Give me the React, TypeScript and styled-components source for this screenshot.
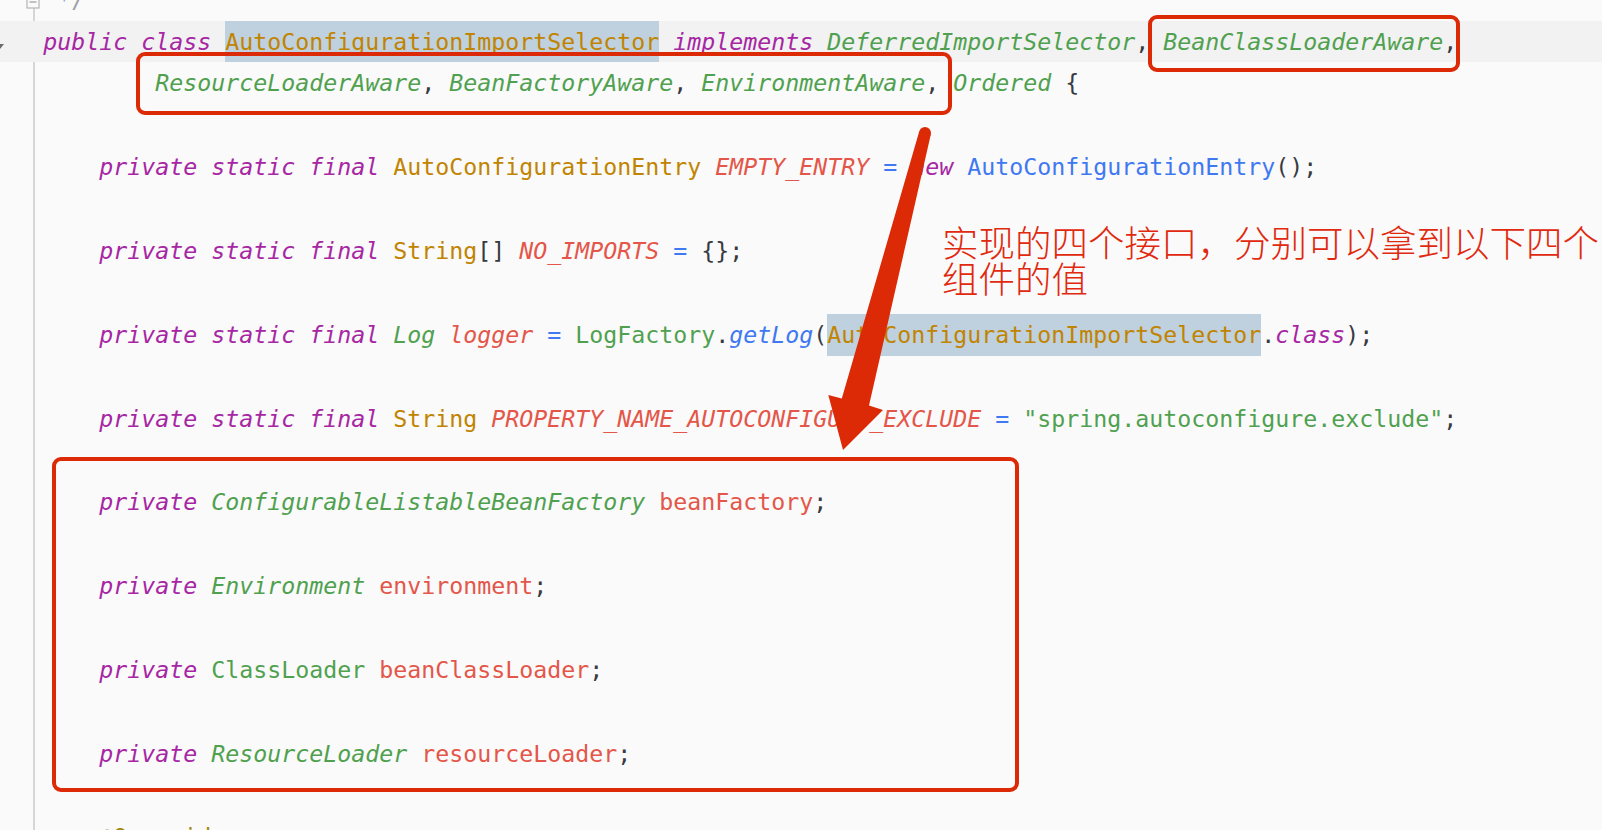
import React from 'react'
import styled, { createGlobalStyle } from 'styled-components'

// IntelliJ light-ish palette
const C = {
  kw: '#a626a4',
  gold: '#c18401',
  green: '#50a14f',
  red: '#e45649',
  blue: '#4078f2',
  plain: '#383a42',
  comment: '#a0a1a7',
  anno: '#9e880d',
  mark: '#dc2a06',
}

type Tok = { t: string; c: string; i?: boolean; sel?: boolean }

const p = (t: string): Tok => ({ t, c: C.plain })
const kw = (t: string): Tok => ({ t, c: C.kw, i: true })
const gold = (t: string, sel = false): Tok => ({ t, c: C.gold, sel })
const gi = (t: string): Tok => ({ t, c: C.green, i: true })
const green = (t: string): Tok => ({ t, c: C.green })
const ri = (t: string): Tok => ({ t, c: C.red, i: true })
const red = (t: string): Tok => ({ t, c: C.red })
const blue = (t: string, i = false): Tok => ({ t, c: C.blue, i })

const field = (...rest: Tok[]): Tok[] => [p('    '), kw('private'), p(' '), ...rest]
const constant = (...rest: Tok[]): Tok[] =>
  field(kw('static'), p(' '), kw('final'), p(' '), ...rest)

const lines: Tok[][] = [
  [p(' '), { t: '*/', c: C.comment }],
  [
    kw('public'), p(' '), kw('class'), p(' '),
    gold('AutoConfigurationImportSelector', true), p(' '),
    kw('implements'), p(' '), gi('DeferredImportSelector'), p(', '),
    gi('BeanClassLoaderAware'), p(','),
  ],
  [
    p('        '), gi('ResourceLoaderAware'), p(', '), gi('BeanFactoryAware'), p(', '),
    gi('EnvironmentAware'), p(', '), gi('Ordered'), p(' {'),
  ],
  [],
  constant(
    gold('AutoConfigurationEntry'), p(' '), ri('EMPTY_ENTRY'), p(' '), blue('='), p(' '),
    kw('new'), p(' '), blue('AutoConfigurationEntry'), p('();'),
  ),
  [],
  constant(gold('String'), p('[] '), ri('NO_IMPORTS'), p(' '), blue('='), p(' {};')),
  [],
  constant(
    gi('Log'), p(' '), ri('logger'), p(' '), blue('='), p(' '), green('LogFactory'), p('.'),
    blue('getLog', true), p('('), gold('AutoConfigurationImportSelector', true), p('.'),
    kw('class'), p(');'),
  ),
  [],
  constant(
    gold('String'), p(' '), ri('PROPERTY_NAME_AUTOCONFIGURE_EXCLUDE'), p(' '), blue('='), p(' '),
    green('"spring.autoconfigure.exclude"'), p(';'),
  ),
  [],
  field(gi('ConfigurableListableBeanFactory'), p(' '), red('beanFactory'), p(';')),
  [],
  field(gi('Environment'), p(' '), red('environment'), p(';')),
  [],
  field(green('ClassLoader'), p(' '), red('beanClassLoader'), p(';')),
  [],
  field(gi('ResourceLoader'), p(' '), red('resourceLoader'), p(';')),
  [],
  [p('    '), { t: '@Override', c: C.anno }],
]

const ACTIVE = 1

const App: React.FC = () => {
  return (
    <Page>
      <GlobalStyle />
      <Editor>
        {lines.map((toks, n) => (
          <Row key={n} $active={n === ACTIVE}>
            <Gutter>
              {n === 0 && (
                <FoldBox width="15" height="15" viewBox="0 0 15 15">
                  <rect x="1" y="1" width="12" height="12" fill="#fafafa" stroke="#b4b4b4" strokeWidth="1.2" />
                  <line x1="3.5" y1="7" x2="10.5" y2="7" stroke="#9a9a9a" strokeWidth="1.2" />
                </FoldBox>
              )}
              {n === ACTIVE && (
                <FoldArrow width="10" height="10" viewBox="0 0 10 10">
                  <path d="M0 2 L8 2 L4 7 Z" fill="#6b6b6b" />
                </FoldArrow>
              )}
            </Gutter>
            <Code $active={n === ACTIVE}>
              {toks.map((tk, j) => (
                <Token key={j} $c={tk.c} $i={tk.i} $sel={tk.sel}>
                  {tk.t}
                </Token>
              ))}
            </Code>
          </Row>
        ))}
      </Editor>

      <Mark $x={1148} $y={15} $w={312} $h={57} />
      <Mark $x={136} $y={52} $w={816} $h={63} />
      <Mark $x={52} $y={457} $w={967} $h={335} />

      <Arrow width="1602" height="830" viewBox="0 0 1602 830">
        <circle cx="925" cy="133" r="6" fill={C.mark} />
        <polygon
          points="919.2,131.5 930.8,134.5 869,405.5 883,410 843,450 828.3,395 841.8,398.5"
          fill={C.mark}
        />
      </Arrow>

      <Note>
        实现的四个接口，分别可以拿到以下四个
        <br />
        组件的值
      </Note>
    </Page>
  )
}

export default App

const GlobalStyle = createGlobalStyle`
  html, body {
    margin: 0;
    padding: 0;
    background: #fafafa;
    overflow: hidden;
  }
`

const Page = styled.div`
  position: relative;
  width: 1602px;
  height: 830px;
  overflow: hidden;
  background: #fafafa;
`

const Editor = styled.div`
  margin-top: -21.4px;
  display: flex;
  flex-direction: column;
  font-family: "DejaVu Sans Mono", "Liberation Mono", monospace;
  font-size: 23.25px;
`

const Row = styled.div<{ $active?: boolean }>`
  display: flex;
  height: 41.9px;
  flex: none;
  background: ${(p) => (p.$active ? '#f2f2f2' : 'transparent')};
`

const Gutter = styled.div`
  position: relative;
  width: 33px;
  flex: none;
`

const FoldBox = styled.svg`
  position: absolute;
  left: 26px;
  top: 16px;
  z-index: 1;
`

const FoldArrow = styled.svg`
  position: absolute;
  left: -4px;
  top: 21px;
`

const Code = styled.div<{ $active?: boolean }>`
  flex: 1;
  border-left: 2px solid ${(p) => (p.$active ? 'transparent' : '#d6d6d6')};
  padding-left: 8.3px;
  line-height: 41.9px;
  white-space: pre;
  color: #383a42;
`

const Token = styled.span<{ $c: string; $i?: boolean; $sel?: boolean }>`
  color: ${(p) => p.$c};
  font-style: ${(p) => (p.$i ? 'italic' : 'normal')};
  ${(p) =>
    p.$sel &&
    `
    display: inline-block;
    vertical-align: top;
    height: 41.9px;
    background: #bfd0de;
  `}
`

const Mark = styled.div<{ $x: number; $y: number; $w: number; $h: number }>`
  position: absolute;
  left: ${(p) => p.$x}px;
  top: ${(p) => p.$y}px;
  width: ${(p) => p.$w}px;
  height: ${(p) => p.$h}px;
  box-sizing: border-box;
  border: 4px solid ${C.mark};
  border-radius: 9px;
`

const Arrow = styled.svg`
  position: absolute;
  left: 0;
  top: 0;
  pointer-events: none;
`

const Note = styled.div`
  position: absolute;
  left: 942px;
  top: 224px;
  font-family: "Noto Sans CJK SC", sans-serif;
  font-weight: 300;
  font-size: 36.5px;
  line-height: 35.5px;
  color: #e0290e;
  white-space: nowrap;
`
